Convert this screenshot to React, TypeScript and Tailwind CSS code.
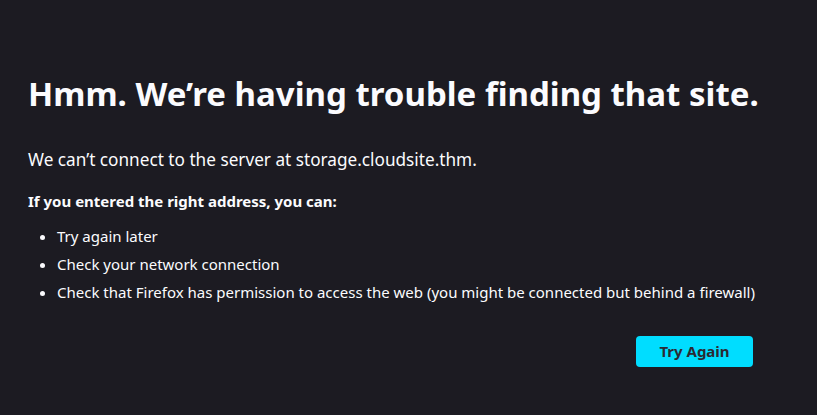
export default function App() {
  return (
    <div
      className="min-h-[415px] w-full bg-[#1c1b22] text-[#fbfbfe]"
      style={{ fontFamily: '"Noto Sans", "Open Sans", sans-serif' }}
    >
      <div className="ml-[28px] w-[725px] pt-[72px]">
        <h1 className="whitespace-nowrap text-[33px] font-bold leading-[44px]">
          Hmm. We’re having trouble finding that site.
        </h1>
        <p className="mt-[32px] whitespace-nowrap text-[17.2px] leading-[24px]">
          We can’t connect to the server at storage.cloudsite.thm.
        </p>
        <p className="mt-[19px] whitespace-nowrap text-[15px] font-bold leading-[20px]">
          If you entered the right address, you can:
        </p>
        <ul className="mt-[15px] flex flex-col gap-[8px] whitespace-nowrap pl-[29px] text-[15px] leading-[20px]">
          <li className="list-disc">Try again later</li>
          <li className="list-disc">Check your network connection</li>
          <li className="list-disc">
            Check that Firefox has permission to access the web (you might be
            connected but behind a firewall)
          </li>
        </ul>
        <div className="mt-[34px] flex justify-end">
          <button className="h-[31px] w-[117px] rounded-[4px] bg-[#00ddff] text-[15px] font-bold text-[#2b2a33]">
            Try Again
          </button>
        </div>
      </div>
    </div>
  );
}
